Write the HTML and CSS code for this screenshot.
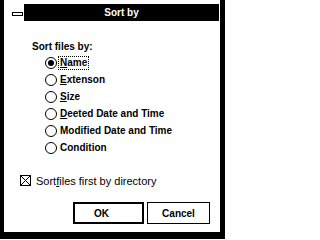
FILE: index.html
```html
<!DOCTYPE html>
<html>
<head>
<meta charset="utf-8">
<link rel="stylesheet" href="styles.css">
</head>
<body>
<div class="window">
  <div class="titlerow">
    <div class="sysbox"><span class="minus"></span></div>
    <div class="title">Sort by</div>
  </div>
  <div class="content">
    <div class="heading">Sort files by:</div>
    <ul class="radios">
      <li class="opt"><span class="radio on"></span><span class="label focus"><u>N</u>ame</span></li>
      <li class="opt"><span class="radio"></span><span class="label"><u>E</u>xtenson</span></li>
      <li class="opt"><span class="radio"></span><span class="label"><u>S</u>ize</span></li>
      <li class="opt"><span class="radio"></span><span class="label"><u>D</u>eeted Date and Time</span></li>
      <li class="opt"><span class="radio"></span><span class="label">Modified Date and Time</span></li>
      <li class="opt"><span class="radio"></span><span class="label">Condition</span></li>
    </ul>
    <div class="check">
      <svg class="box" width="11" height="11" viewBox="0 0 11 11"><rect x="0.5" y="0.5" width="10" height="10" fill="#fff" stroke="#000"/><path d="M1 1L10 10M10 1L1 10" stroke="#000" stroke-width="1"/></svg>
      <span class="checklabel">Sort<u>f</u>iles first by directory</span>
    </div>
    <div class="buttons">
      <div class="btn default">OK</div>
      <div class="btn cancel">Cancel</div>
    </div>
  </div>
</div>
</body>
</html>
```
FILE: styles.css
```css
html, body {
  margin: 0;
  padding: 0;
  background: #fff;
}
.window {
  width: 225px;
  height: 239px;
  box-sizing: border-box;
  background: #fff;
  border-left: 4px solid #000;
  border-right: 5px solid #000;
  border-bottom: 7px solid #000;
  display: flex;
  flex-direction: column;
  font-family: "Liberation Sans", Arial, sans-serif;
  color: #000;
  overflow: hidden;
}
.titlerow {
  display: flex;
  height: 17px;
  margin: 4px 1px 0 0;
  flex: none;
}
.sysbox {
  width: 20px;
  box-sizing: border-box;
  padding: 8px 0 0 8px;
  background: #fff;
}
.minus {
  display: block;
  width: 9px;
  height: 2px;
  border: 1px solid #000;
  background: #fff;
}
.title {
  flex: 1;
  background: #000;
  color: #fff;
  font-weight: bold;
  font-size: 10px;
  display: flex;
  align-items: center;
  justify-content: center;
}
.content {
  padding: 20px 0 0 16px;
}
.heading {
  margin-left: 12px;
  font-weight: bold;
  font-size: 10px;
  line-height: 12px;
}
.radios {
  list-style: none;
  margin: 1px 0 0 25px;
  padding: 0;
}
.opt {
  height: 17px;
  display: flex;
  align-items: center;
  gap: 2px;
  font-weight: bold;
  font-size: 10px;
}
.radio {
  width: 12px;
  height: 12px;
  box-sizing: border-box;
  border: 1px solid #000;
  border-radius: 50%;
  background: #fff;
  display: flex;
  align-items: center;
  justify-content: center;
}
.radio.on::after {
  content: "";
  width: 6px;
  height: 6px;
  border-radius: 50%;
  background: #000;
}
.label {
  line-height: 12px;
  padding: 0 1px;
}
.focus {
  outline: 1px dotted #000;
}
.check {
  margin-top: 18px;
  height: 13px;
  display: flex;
  align-items: center;
  gap: 5px;
  font-size: 11px;
}
.box {
  display: block;
}
.buttons {
  margin: 15px 0 0 53px;
  display: flex;
  gap: 3px;
}
.btn {
  height: 22px;
  box-sizing: border-box;
  border: 1px solid #000;
  display: flex;
  align-items: center;
  justify-content: center;
  font-weight: bold;
  font-size: 10px;
}
.btn.default {
  width: 71px;
  border-width: 2px;
  padding-right: 14px;
}
.btn.cancel {
  width: 63px;
}
```
